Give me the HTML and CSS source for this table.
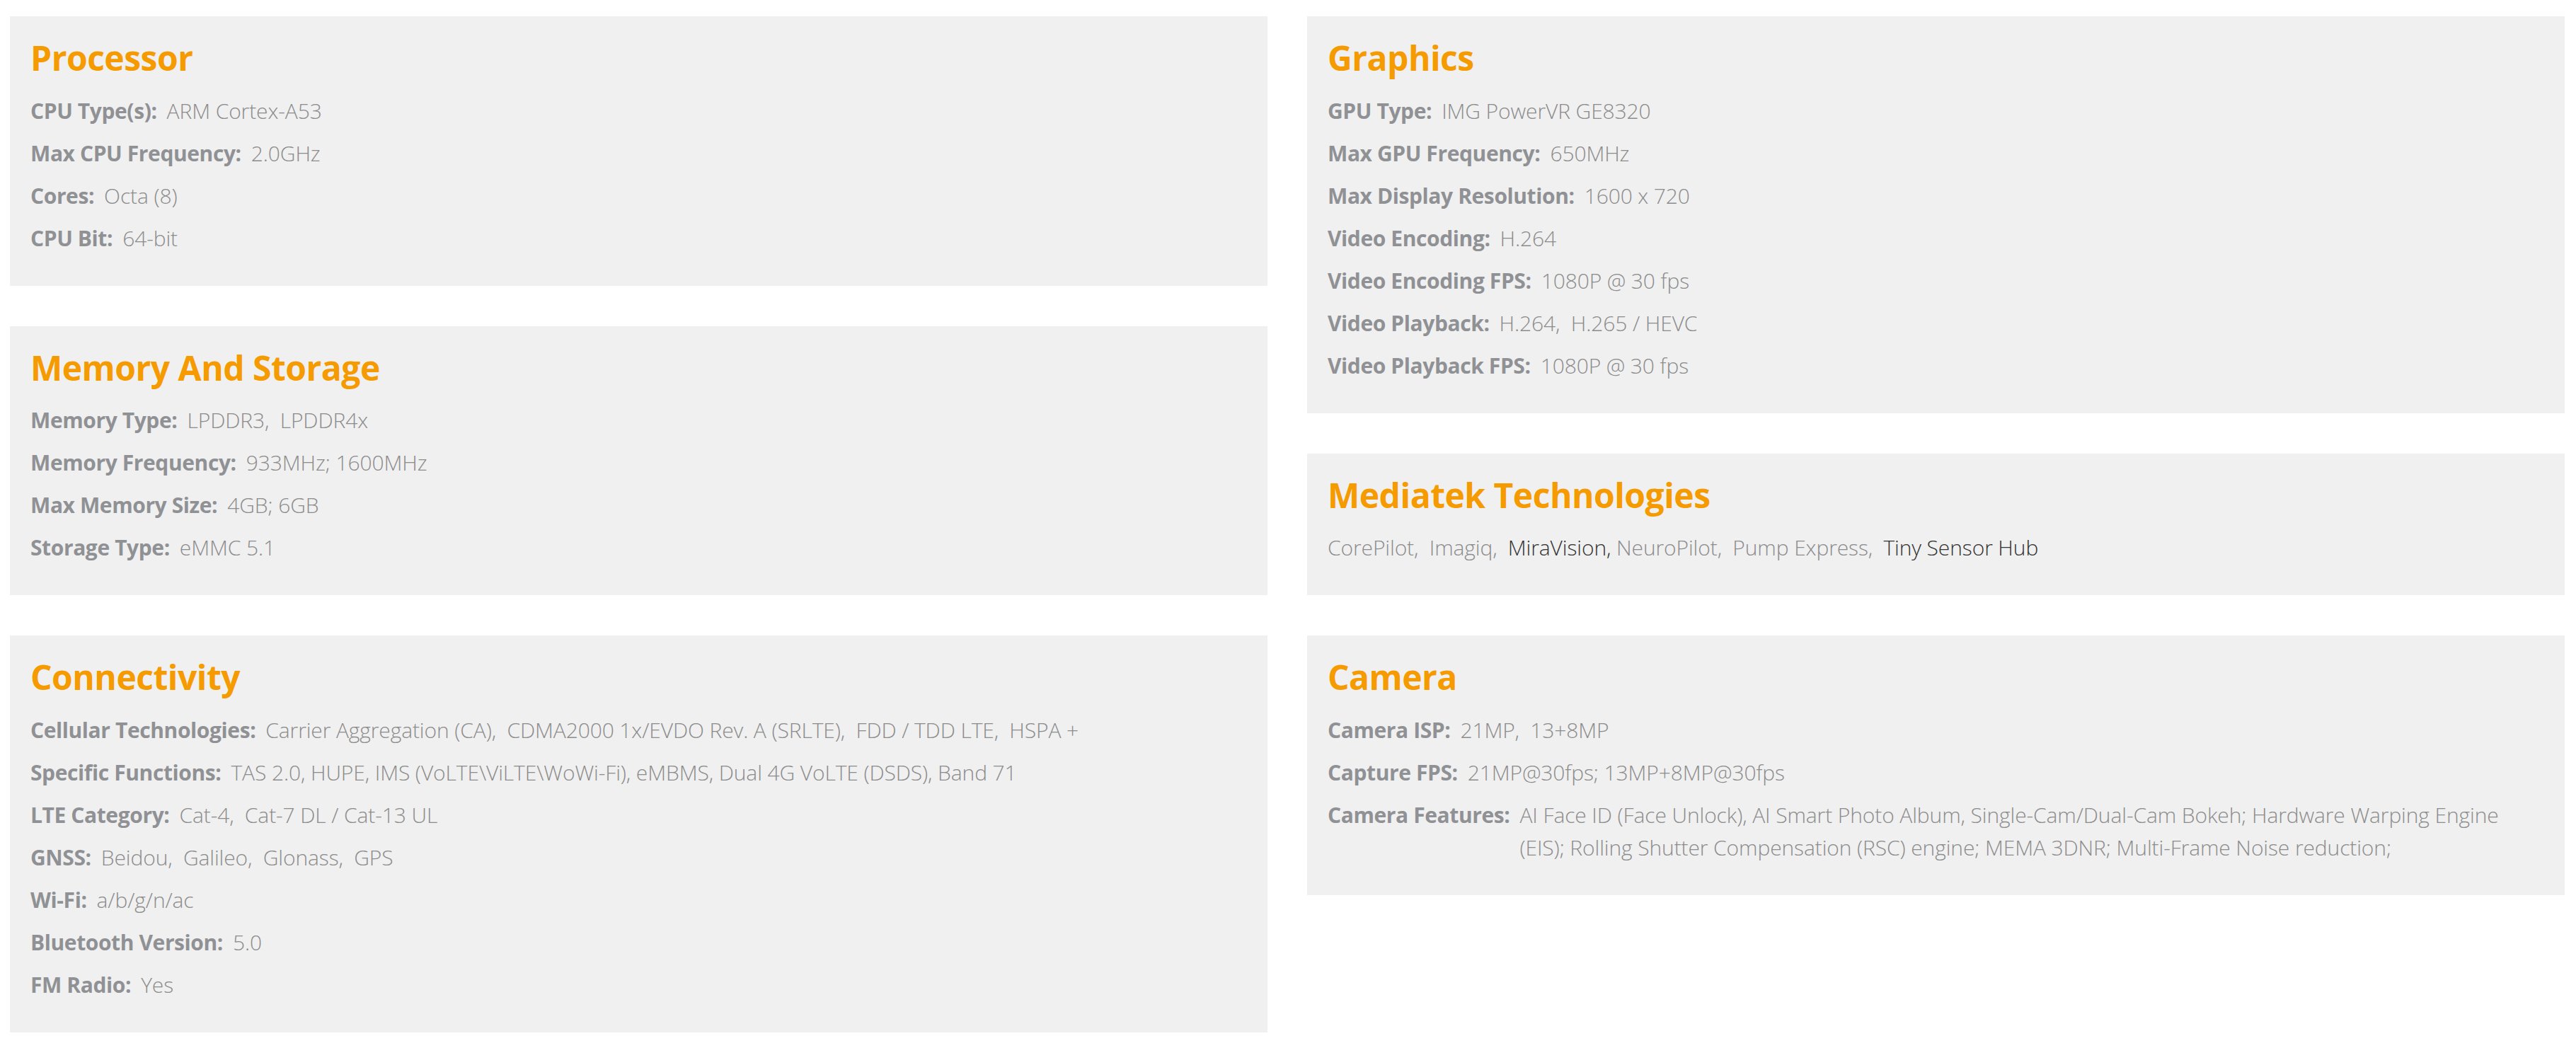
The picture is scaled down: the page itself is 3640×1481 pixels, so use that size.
FILE: index.html
```html
<!DOCTYPE html>
<html lang="en">
<head>
<meta charset="utf-8">
<title>Specifications</title>
<link rel="stylesheet" href="styles.css">
</head>
<body>
<main class="specs">
  <div class="col">
    <section class="card">
      <h2 class="card-title">Processor</h2>
      <div class="row"><span class="label">CPU Type(s):</span><span class="value">ARM Cortex-A53</span></div>
      <div class="row"><span class="label">Max CPU Frequency:</span><span class="value">2.0GHz</span></div>
      <div class="row"><span class="label">Cores:</span><span class="value">Octa (8)</span></div>
      <div class="row"><span class="label">CPU Bit:</span><span class="value">64-bit</span></div>
    </section>
    <section class="card">
      <h2 class="card-title">Memory And Storage</h2>
      <div class="row"><span class="label">Memory Type:</span><span class="value">LPDDR3,&nbsp; LPDDR4x</span></div>
      <div class="row"><span class="label">Memory Frequency:</span><span class="value">933MHz; 1600MHz</span></div>
      <div class="row"><span class="label">Max Memory Size:</span><span class="value">4GB; 6GB</span></div>
      <div class="row"><span class="label">Storage Type:</span><span class="value">eMMC 5.1</span></div>
    </section>
    <section class="card">
      <h2 class="card-title">Connectivity</h2>
      <div class="row"><span class="label">Cellular Technologies:</span><span class="value">Carrier Aggregation (CA),&nbsp; CDMA2000 1x/EVDO Rev. A (SRLTE),&nbsp; FDD / TDD LTE,&nbsp; HSPA +</span></div>
      <div class="row"><span class="label">Specific Functions:</span><span class="value">TAS 2.0, HUPE, IMS (VoLTE\ViLTE\WoWi-Fi), eMBMS, Dual 4G VoLTE (DSDS), Band 71</span></div>
      <div class="row"><span class="label">LTE Category:</span><span class="value">Cat-4,&nbsp; Cat-7 DL / Cat-13 UL</span></div>
      <div class="row"><span class="label">GNSS:</span><span class="value">Beidou,&nbsp; Galileo,&nbsp; Glonass,&nbsp; GPS</span></div>
      <div class="row"><span class="label">Wi-Fi:</span><span class="value">a/b/g/n/ac</span></div>
      <div class="row"><span class="label">Bluetooth Version:</span><span class="value">5.0</span></div>
      <div class="row"><span class="label">FM Radio:</span><span class="value">Yes</span></div>
    </section>
  </div>
  <div class="col">
    <section class="card">
      <h2 class="card-title">Graphics</h2>
      <div class="row"><span class="label">GPU Type:</span><span class="value">IMG PowerVR GE8320</span></div>
      <div class="row"><span class="label">Max GPU Frequency:</span><span class="value">650MHz</span></div>
      <div class="row"><span class="label">Max Display Resolution:</span><span class="value">1600 x 720</span></div>
      <div class="row"><span class="label">Video Encoding:</span><span class="value">H.264</span></div>
      <div class="row"><span class="label">Video Encoding FPS:</span><span class="value">1080P @ 30 fps</span></div>
      <div class="row"><span class="label">Video Playback:</span><span class="value">H.264,&nbsp; H.265 / HEVC</span></div>
      <div class="row"><span class="label">Video Playback FPS:</span><span class="value">1080P @ 30 fps</span></div>
    </section>
    <section class="card">
      <h2 class="card-title">Mediatek Technologies</h2>
      <div class="row"><span class="value">CorePilot,&nbsp; Imagiq,&nbsp; <span class="link">MiraVision,</span> NeuroPilot,&nbsp; Pump Express,&nbsp; <span class="link">Tiny Sensor Hub</span></span></div>
    </section>
    <section class="card">
      <h2 class="card-title">Camera</h2>
      <div class="row"><span class="label">Camera ISP:</span><span class="value">21MP,&nbsp; 13+8MP</span></div>
      <div class="row"><span class="label">Capture FPS:</span><span class="value">21MP@30fps; 13MP+8MP@30fps</span></div>
      <div class="row"><span class="label">Camera Features:</span><span class="value">AI Face ID (Face Unlock), AI Smart Photo Album, Single-Cam/Dual-Cam Bokeh; Hardware Warping Engine (EIS); Rolling Shutter Compensation (RSC) engine; MEMA 3DNR; Multi-Frame Noise reduction;</span></div>
    </section>
  </div>
</main>
</body>
</html>
```
FILE: styles.css
```css
html, body {
  margin: 0;
  padding: 0;
  background: #ffffff;
}

body {
  font-family: "Open Sans", "Liberation Sans", sans-serif;
}

.specs {
  display: grid;
  grid-template-columns: 1fr 1fr;
  column-gap: 56px;
  padding: 23px 16px 0 14px;
  align-items: start;
}

.col {
  display: flex;
  flex-direction: column;
  gap: 57px;
}

.card {
  background: #f0f0f0;
  padding: 30px 29px 30px 29px;
}

.card-title {
  margin: 0 0 23px 0;
  font-size: 48px;
  line-height: 57.6px;
  font-weight: 700;
  color: #f59b00;
  letter-spacing: -0.5px;
}

.row {
  display: flex;
  align-items: flex-start;
  font-size: 30px;
  line-height: 46px;
  margin-bottom: 14px;
}

.label {
  flex: none;
  font-weight: 700;
  color: #8f9194;
  margin-right: 14px;
  letter-spacing: -0.4px;
}

.value {
  flex: 1;
  font-weight: 300;
  color: #8c8c8c;
  letter-spacing: -0.12px;
}

.link {
  color: #333333;
}
```
